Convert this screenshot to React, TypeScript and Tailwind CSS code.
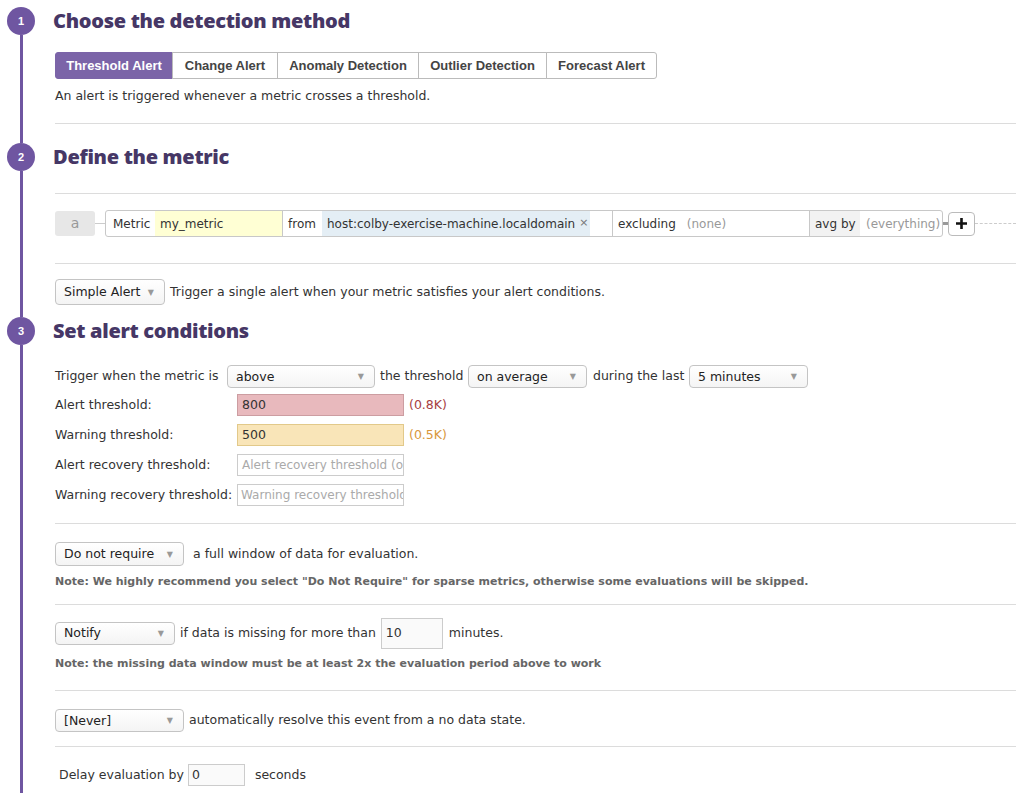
const body = { fontFamily: '"DejaVu Sans", "Liberation Sans", sans-serif' };
const head = { fontFamily: '"Open Sans", "Noto Sans", sans-serif' };
const helv = { fontFamily: '"Liberation Sans", Arial, sans-serif' };

function Step({ n, children }: { n: number; children: React.ReactNode }) {
  return (
    <div className="flex">
      <div className="w-[42px] flex flex-col items-center shrink-0">
        <div className="w-[28px] h-[28px] rounded-full bg-[#6f56a1] text-white text-[11px] font-bold flex items-center justify-center" style={helv}>
          {n}
        </div>
        <div className="w-[3px] flex-1 bg-[#6f56a1]"></div>
      </div>
      <div className="flex-1 pl-[11px]">{children}</div>
    </div>
  );
}

function Heading({ children }: { children: React.ReactNode }) {
  return (
    <h2 className="h-[28px] leading-[28px] text-[20px] font-extrabold text-[#463766] tracking-[-0.3px]" style={head}>
      {children}
    </h2>
  );
}

function Select({ label, w, h = "h-[23px]" }: { label: string; w: string; h?: string }) {
  return (
    <div className={`${w} ${h} shrink-0 flex items-center justify-between border border-[#c4c4c4] rounded-[4px] bg-gradient-to-b from-white to-[#f4f4f4] pl-[8px] pr-[10px] pt-px text-[12.5px] text-[#222]`}>
      <span>{label}</span>
      <span className="text-[8px] text-[#999]">▼</span>
    </div>
  );
}

function Hr({ className = "" }: { className?: string }) {
  return <div className={`h-px bg-[#dcdcdc] ml-[2px] ${className}`}></div>;
}

const tabs = ["Threshold Alert", "Change Alert", "Anomaly Detection", "Outlier Detection", "Forecast Alert"];
const tabW = ["w-[118px]", "w-[106px]", "w-[142px]", "w-[129px]", "w-[111px]"];

export default function App() {
  return (
    <div className="bg-white w-[1016px] h-[793px] overflow-hidden text-[#333] pt-[7px]" style={body}>
      {/* Step 1 */}
      <Step n={1}>
        <Heading>Choose the detection method</Heading>
        <div className="ml-[2px] mt-[17px] flex">
          {tabs.map((t, i) => (
            <div
              key={t}
              className={`${tabW[i]} h-[27px] flex items-center justify-center text-[13px] font-bold border ${i > 0 ? "-ml-px" : ""} ${
                i === 0 ? "bg-[#7b64a8] border-[#7b64a8] text-white rounded-l-[3px]" : "bg-white text-[#444] border-[#bbb]"
              } ${i === tabs.length - 1 ? "rounded-r-[3px]" : ""}`}
              style={helv}
            >
              {t}
            </div>
          ))}
        </div>
        <p className="ml-[2px] mt-[8px] text-[12.5px] leading-[18px]">An alert is triggered whenever a metric crosses a threshold.</p>
        <Hr className="mt-[18px] mb-[19px]" />
      </Step>

      {/* Step 2 */}
      <Step n={2}>
        <Heading>Define the metric</Heading>
        <Hr className="mt-[22px]" />
        <div className="ml-[2px] mt-[16px] flex items-center text-[12px] whitespace-nowrap">
          <div className="w-[40px] h-[25px] rounded-[3px] bg-[#e7e7e7] text-[#999] text-[14px] flex items-center justify-center">a</div>
          <div className="w-[10px] h-px bg-[#ccc]"></div>
          <div className="flex h-[27px] border border-[#c8c8c8] rounded-[3px] overflow-hidden">
            <div className="flex items-center pl-[7px] w-[49px]">Metric</div>
            <div className="flex items-center pl-[5px] w-[128px] bg-[#ffffd4] border-r border-[#c8c8c8]">my_metric</div>
            <div className="flex items-center pl-[5px] w-[39px]">from</div>
            <div className="flex items-center w-[291px] border-r border-[#c8c8c8]">
              <div className="h-full flex items-center pl-[5px] pr-[5px] bg-[#e4eef5] w-[268px]">
                host:colby-exercise-machine.localdomain <span className="ml-[4px] text-[#777] text-[11px]">×</span>
              </div>
            </div>
            <div className="flex items-center pl-[5px] w-[197px] border-r border-[#c8c8c8]">
              excluding <span className="ml-[11px] text-[#999]">(none)</span>
            </div>
            <div className="flex items-center pl-[5px] w-[50px] bg-[#f2f2f2]">avg by</div>
            <div className="flex items-center pl-[6px] w-[82px] text-[#999]">(everything)</div>
          </div>
          <div className="w-[5px] h-[3px] bg-[#999]"></div>
          <div className="w-[27px] h-[24px] border border-[#bbb] rounded-[4px] flex items-center justify-center">
            <svg width="11" height="11" viewBox="0 0 11 11"><path d="M5.5 0v11M0 5.5h11" stroke="#111" strokeWidth="2.6" /></svg>
          </div>
          <div className="flex-1 border-t border-dashed border-[#ccc]"></div>
        </div>
        <Hr className="mt-[26px]" />
        <div className="ml-[2px] mt-[15px] flex items-center gap-[5px]">
          <Select label="Simple Alert" w="w-[110px]" h="h-[26px]" />
          <span className="text-[12.5px]">Trigger a single alert when your metric satisfies your alert conditions.</span>
        </div>
        <div className="h-[12px]"></div>
      </Step>

      {/* Step 3 */}
      <Step n={3}>
        <Heading>Set alert conditions</Heading>
        <div className="ml-[2px] mt-[20px] flex items-center text-[12.5px]">
          <span className="w-[172px]">Trigger when the metric is</span>
          <Select label="above" w="w-[148px]" />
          <span className="ml-[5px] w-[88px]">the threshold</span>
          <Select label="on average" w="w-[119px]" />
          <span className="ml-[6px] w-[96px]">during the last</span>
          <Select label="5 minutes" w="w-[119px]" />
        </div>
        <div className="ml-[2px] mt-[6px] flex flex-col gap-[8px] text-[12.5px]">
          <div className="flex items-center">
            <span className="w-[182px]">Alert threshold:</span>
            <div className="w-[167px] h-[22px] bg-[#e8b9bd] border border-[#cc9da1] flex items-center pl-[4px]">800</div>
            <span className="ml-[5px] text-[#a8403f]">(0.8K)</span>
          </div>
          <div className="flex items-center">
            <span className="w-[182px]">Warning threshold:</span>
            <div className="w-[167px] h-[22px] bg-[#f9e5b8] border border-[#e2c98a] flex items-center pl-[4px]">500</div>
            <span className="ml-[5px] text-[#d8973c]">(0.5K)</span>
          </div>
          <div className="flex items-center">
            <span className="w-[182px]">Alert recovery threshold:</span>
            <div className="w-[167px] h-[22px] bg-white border border-[#ccc] flex items-center pl-[4px] text-[#aaa] text-[12px] overflow-hidden whitespace-nowrap">Alert recovery threshold (op</div>
          </div>
          <div className="flex items-center">
            <span className="w-[182px]">Warning recovery threshold:</span>
            <div className="w-[167px] h-[22px] bg-white border border-[#ccc] flex items-center pl-[3px] text-[#aaa] text-[12px] overflow-hidden whitespace-nowrap">Warning recovery threshold</div>
          </div>
        </div>
        <Hr className="mt-[17px]" />
        <div className="ml-[2px] mt-[18px] flex items-center text-[12.5px]">
          <Select label="Do not require" w="w-[129px]" h="h-[24px]" />
          <span className="ml-[9px]">a full window of data for evaluation.</span>
        </div>
        <p className="ml-[2px] mt-[8px] text-[11px] font-bold text-[#666]">
          Note: We highly recommend you select "Do Not Require" for sparse metrics, otherwise some evaluations will be skipped.
        </p>
        <Hr className="mt-[13px]" />
        <div className="ml-[2px] mt-[13px] flex items-center text-[12.5px]">
          <Select label="Notify" w="w-[120px]" />
          <span className="ml-[5px]">if data is missing for more than</span>
          <div className="ml-[5px] w-[62px] h-[31px] bg-[#fafafa] border border-[#ccc] flex items-center pl-[4px]">10</div>
          <span className="ml-[6px]">minutes.</span>
        </div>
        <p className="ml-[2px] mt-[7px] text-[11px] font-bold text-[#666]">
          Note: the missing data window must be at least 2x the evaluation period above to work
        </p>
        <Hr className="mt-[18px]" />
        <div className="ml-[2px] mt-[18px] flex items-center text-[12.5px]">
          <Select label="[Never]" w="w-[129px]" />
          <span className="ml-[5px]">automatically resolve this event from a no data state.</span>
        </div>
        <Hr className="mt-[14px]" />
        <div className="ml-[6px] mt-[17px] flex items-center text-[12.5px]">
          <span>Delay evaluation by</span>
          <div className="ml-[4px] w-[57px] h-[22px] bg-[#fafafa] border border-[#ccc] flex items-center pl-[3px]">0</div>
          <span className="ml-[10px]">seconds</span>
        </div>
        <div className="h-[40px]"></div>
      </Step>
    </div>
  );
}
